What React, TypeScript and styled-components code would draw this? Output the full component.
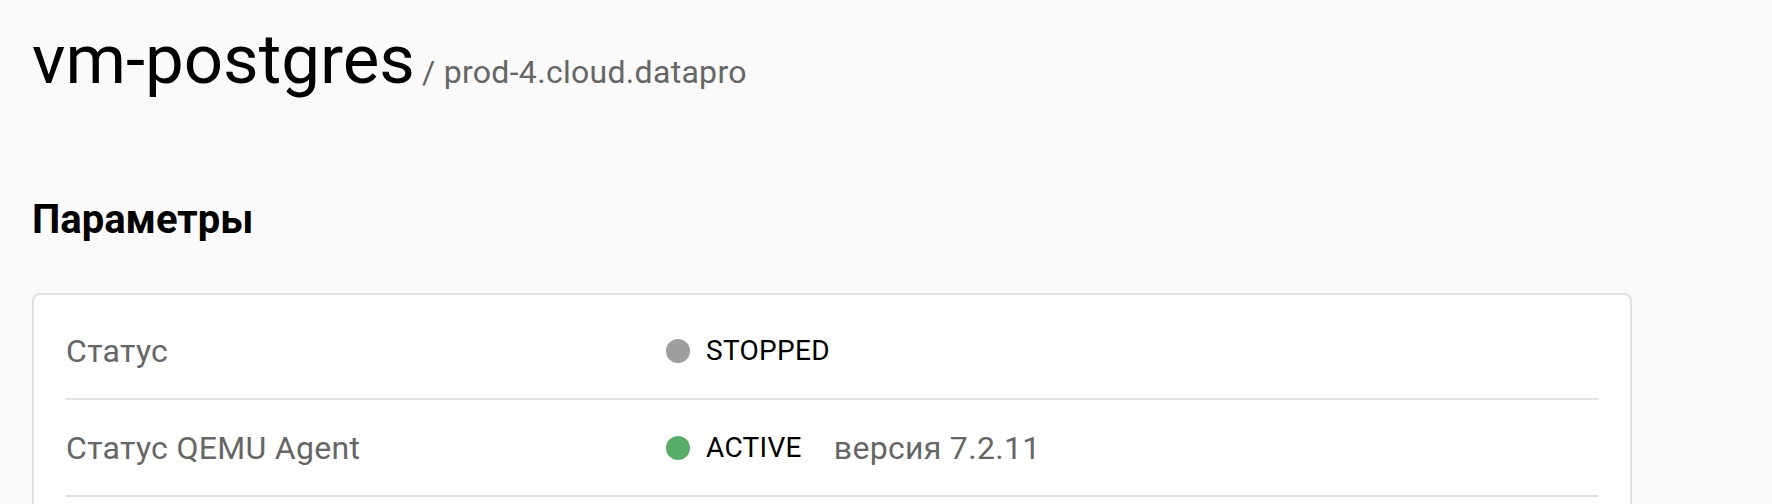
import React from "react";
import styled, { createGlobalStyle } from "styled-components";

const GlobalStyle = createGlobalStyle`
  html, body {
    margin: 0;
    padding: 0;
    background: #fafafa;
    font-family: Roboto, "Noto Sans", Arial, sans-serif;
    color: #000;
  }
`;

const Page = styled.div`
  padding: 19px 32px 0 32px;
  display: flex;
  flex-direction: column;
`;

const TitleRow = styled.div`
  display: flex;
  align-items: baseline;
  gap: 7px;
`;

const Title = styled.h1`
  margin: 0;
  font-size: 69px;
  font-weight: 400;
  line-height: normal;
  color: #000;
`;

const Host = styled.span`
  font-size: 32px;
  letter-spacing: 0.3px;
  color: #666;
`;

const SectionTitle = styled.h2`
  margin: 96px 0 50px 0;
  font-size: 40px;
  font-weight: 700;
  line-height: normal;
  color: #000;
`;

const Card = styled.div`
  width: 1600px;
  box-sizing: border-box;
  background: #fff;
  border: 2px solid #e0e0e0;
  border-radius: 8px;
  padding: 8px 32px 32px;
`;

const Row = styled.div`
  display: grid;
  grid-template-columns: 600px 1fr;
  align-items: center;
  min-height: 95px;
  border-bottom: 2px solid #e0e0e0;
`;

const Label = styled.div`
  font-size: 32px;
  letter-spacing: 0.3px;
  color: #666;
`;

const Value = styled.div`
  display: flex;
  align-items: center;
`;

const Dot = styled.span<{ $color: string }>`
  width: 24px;
  height: 24px;
  border-radius: 50%;
  background: ${(p) => p.$color};
  margin-right: 16px;
  flex-shrink: 0;
`;

const StateText = styled.span`
  font-size: 28px;
  letter-spacing: 0.3px;
  color: #000;
`;

const Version = styled.span`
  font-size: 32px;
  letter-spacing: 0.3px;
  color: #666;
  margin-left: 32px;
`;

export default function App() {
  return (
    <>
      <GlobalStyle />
      <Page>
        <TitleRow>
          <Title>vm-postgres</Title>
          <Host>/ prod-4.cloud.datapro</Host>
        </TitleRow>
        <SectionTitle>Параметры</SectionTitle>
        <Card>
          <Row>
            <Label>Статус</Label>
            <Value>
              <Dot $color="#9e9e9e" />
              <StateText>STOPPED</StateText>
            </Value>
          </Row>
          <Row>
            <Label>Статус QEMU Agent</Label>
            <Value>
              <Dot $color="#59ad6a" />
              <StateText>ACTIVE</StateText>
              <Version>версия 7.2.11</Version>
            </Value>
          </Row>
        </Card>
      </Page>
    </>
  );
}
